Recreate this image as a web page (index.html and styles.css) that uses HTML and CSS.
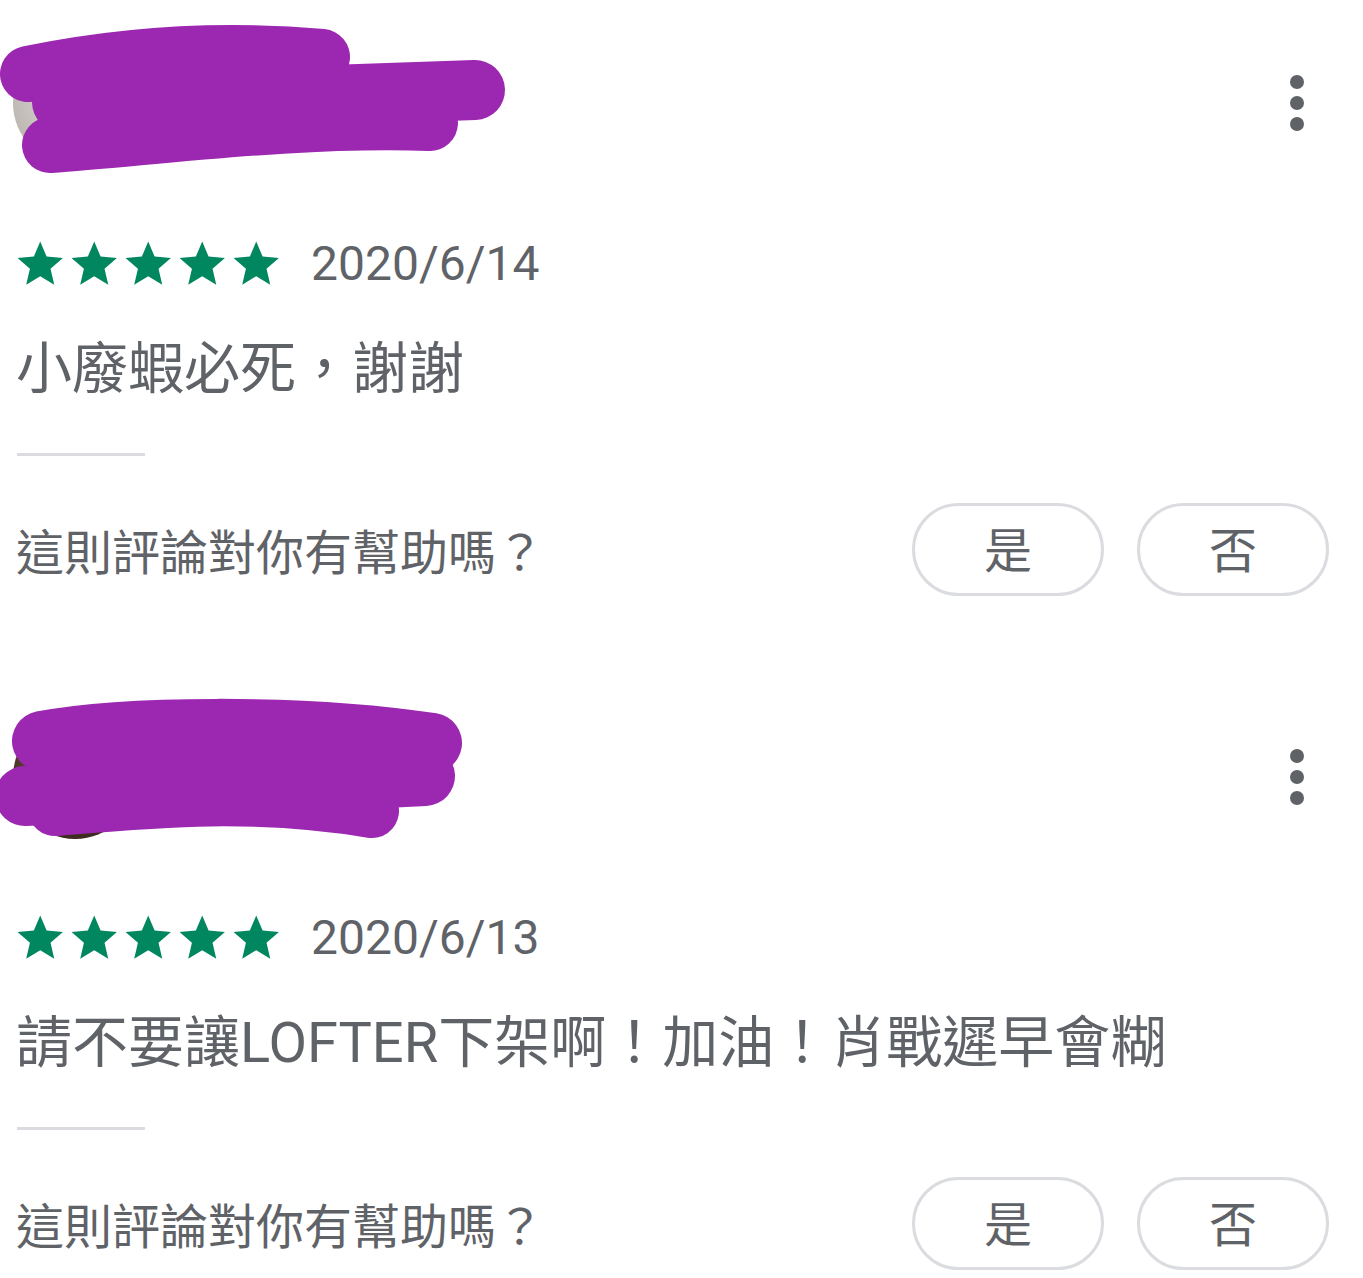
FILE: index.html
```html
<!DOCTYPE html>
<html lang="zh-Hant">

<head>
    <meta charset="UTF-8">
    <meta name="viewport" content="width=device-width, initial-scale=1.0">
    <title>評論</title>
    <link rel="stylesheet" href="styles.css">
</head>

<body>
    <div class="reviews">

        <div class="review">
            <div class="review-header">
                <div class="avatar avatar-grey"></div>
                <span class="author">匿名使用者</span>
                <button class="more" aria-label="更多選項">
                    <span></span><span></span><span></span>
                </button>
            </div>
            <!-- redaction scribble over the user name -->
            <svg class="redact" viewBox="0 0 520 200" aria-hidden="true">
                <path d="M28 74 C120 55, 220 48, 322 57" stroke-width="56" />
                <path d="M330 95 L475 90" stroke-width="60" />
                <path d="M50 145 C150 138, 300 118, 430 123" stroke-width="56" />
                <path d="M62 102 L420 100" stroke-width="60" />
            </svg>
            <div class="review-meta">
                <div class="stars">
                    <svg viewBox="0 0 23.8 23.8"><path d="M12 17.27L18.18 21l-1.64-7.03L22 9.24l-7.19-.61L12 2 9.19 8.63 2 9.24l5.46 4.73L5.82 21z" /></svg>
                    <svg viewBox="0 0 23.8 23.8"><path d="M12 17.27L18.18 21l-1.64-7.03L22 9.24l-7.19-.61L12 2 9.19 8.63 2 9.24l5.46 4.73L5.82 21z" /></svg>
                    <svg viewBox="0 0 23.8 23.8"><path d="M12 17.27L18.18 21l-1.64-7.03L22 9.24l-7.19-.61L12 2 9.19 8.63 2 9.24l5.46 4.73L5.82 21z" /></svg>
                    <svg viewBox="0 0 23.8 23.8"><path d="M12 17.27L18.18 21l-1.64-7.03L22 9.24l-7.19-.61L12 2 9.19 8.63 2 9.24l5.46 4.73L5.82 21z" /></svg>
                    <svg viewBox="0 0 23.8 23.8"><path d="M12 17.27L18.18 21l-1.64-7.03L22 9.24l-7.19-.61L12 2 9.19 8.63 2 9.24l5.46 4.73L5.82 21z" /></svg>
                </div>
                <span class="date">2020/6/14</span>
            </div>
            <p class="review-text">小廢蝦必死，謝謝</p>
            <div class="divider"></div>
            <div class="helpful">
                <span class="helpful-label">這則評論對你有幫助嗎？</span>
                <div class="helpful-actions">
                    <button class="pill">是</button>
                    <button class="pill">否</button>
                </div>
            </div>
        </div>

        <div class="review">
            <div class="review-header">
                <div class="avatar avatar-dark"></div>
                <span class="author">匿名使用者</span>
                <button class="more" aria-label="更多選項">
                    <span></span><span></span><span></span>
                </button>
            </div>
            <svg class="redact" viewBox="0 0 520 200" aria-hidden="true">
                <path d="M42 67 C120 52, 300 49, 432 69" stroke-width="60" />
                <path d="M25 122 L425 102" stroke-width="60" />
                <path d="M55 135 C150 127, 250 117, 372 137" stroke-width="54" />
                <path d="M70 95 L400 90" stroke-width="50" />
            </svg>
            <div class="review-meta">
                <div class="stars">
                    <svg viewBox="0 0 23.8 23.8"><path d="M12 17.27L18.18 21l-1.64-7.03L22 9.24l-7.19-.61L12 2 9.19 8.63 2 9.24l5.46 4.73L5.82 21z" /></svg>
                    <svg viewBox="0 0 23.8 23.8"><path d="M12 17.27L18.18 21l-1.64-7.03L22 9.24l-7.19-.61L12 2 9.19 8.63 2 9.24l5.46 4.73L5.82 21z" /></svg>
                    <svg viewBox="0 0 23.8 23.8"><path d="M12 17.27L18.18 21l-1.64-7.03L22 9.24l-7.19-.61L12 2 9.19 8.63 2 9.24l5.46 4.73L5.82 21z" /></svg>
                    <svg viewBox="0 0 23.8 23.8"><path d="M12 17.27L18.18 21l-1.64-7.03L22 9.24l-7.19-.61L12 2 9.19 8.63 2 9.24l5.46 4.73L5.82 21z" /></svg>
                    <svg viewBox="0 0 23.8 23.8"><path d="M12 17.27L18.18 21l-1.64-7.03L22 9.24l-7.19-.61L12 2 9.19 8.63 2 9.24l5.46 4.73L5.82 21z" /></svg>
                </div>
                <span class="date">2020/6/13</span>
            </div>
            <p class="review-text">請不要讓LOFTER下架啊！加油！肖戰遲早會糊</p>
            <div class="divider"></div>
            <div class="helpful">
                <span class="helpful-label">這則評論對你有幫助嗎？</span>
                <div class="helpful-actions">
                    <button class="pill">是</button>
                    <button class="pill">否</button>
                </div>
            </div>
        </div>

    </div>
</body>

</html>
```

FILE: styles.css
```css
body {
    margin: 0;
    background-color: #fff;
    font-family: Roboto, "Noto Sans CJK TC", sans-serif;
    color: #5f6368;
}

.review {
    position: relative;
    padding: 41px 34px 78px 16px;
}

.review:last-child {
    padding-bottom: 0;
}

.review-header {
    display: flex;
    align-items: center;
    height: 124px;
}

.avatar {
    width: 124px;
    height: 124px;
    border-radius: 50%;
    margin-left: -3px;
    flex-shrink: 0;
}

.avatar-grey {
    background: radial-gradient(circle at 50% 45%, #e4e1dd 0%, #bdb8b2 70%, #55524e 100%);
}

.avatar-dark {
    background: radial-gradient(circle at 50% 40%, #8a6a55 0%, #4a3426 65%, #21160f 100%);
}

.author {
    margin-left: 30px;
    font-size: 44px;
}

.more {
    margin-left: auto;
    width: 64px;
    height: 64px;
    padding: 0;
    border: none;
    background: none;
    display: flex;
    flex-direction: column;
    align-items: center;
    justify-content: center;
    gap: 7px;
}

.more span {
    width: 14px;
    height: 14px;
    border-radius: 50%;
    background-color: #5f6368;
}

/* purple marker scribble that hides the user name */
.redact {
    position: absolute;
    top: 0;
    left: 0;
    width: 520px;
    height: 200px;
    fill: none;
    stroke: #9c27b0;
    stroke-linecap: round;
    stroke-linejoin: round;
}

.review-meta {
    display: flex;
    align-items: center;
    height: 54px;
    margin-top: 72px;
}

.stars {
    display: flex;
    margin-left: -3px;
}

.stars svg {
    width: 54px;
    height: 54px;
    fill: #01875f;
}

.date {
    margin-left: 28px;
    font-size: 48px;
    line-height: 54px;
}

.review-text {
    margin: 38px 0 0;
    font-size: 56px;
    line-height: 80px;
}

.divider {
    width: 128px;
    height: 3px;
    margin-top: 44px;
    margin-left: 1px;
    background-color: #dadce0;
}

.helpful {
    display: flex;
    align-items: center;
    justify-content: space-between;
    margin-top: 47px;
}

.helpful-label {
    font-size: 48px;
    line-height: 60px;
    margin-top: 8px;
}

.helpful-actions {
    display: flex;
    gap: 33px;
}

.pill {
    width: 192px;
    height: 93px;
    border: 3px solid #dadce0;
    border-radius: 47px;
    background-color: #fff;
    font-family: Roboto, "Noto Sans CJK TC", sans-serif;
    font-size: 48px;
    color: #5f6368;
    padding: 0 0 6px;
}
```
